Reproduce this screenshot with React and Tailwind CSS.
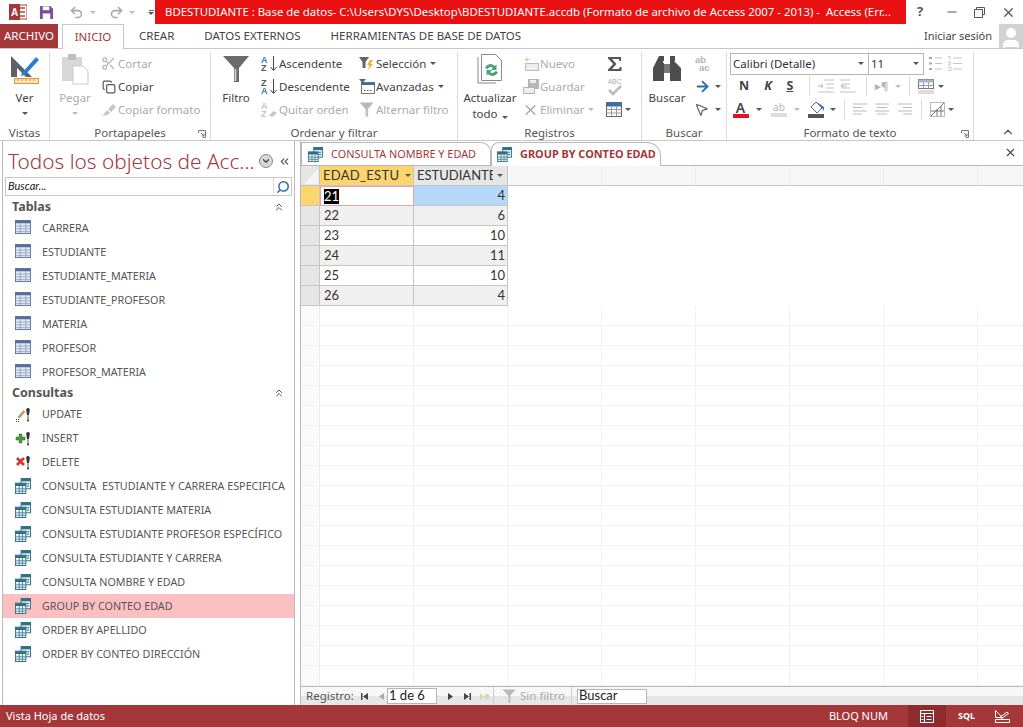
import { Scissors, Copy, Search, ChevronsUp, ChevronsLeft, ChevronDown, ChevronUp, X, Minus, ArrowRight, MousePointer2, Check, User, Undo2, Redo2 } from 'lucide-react';

const tablas = ['CARRERA', 'ESTUDIANTE', 'ESTUDIANTE_MATERIA', 'ESTUDIANTE_PROFESOR', 'MATERIA', 'PROFESOR', 'PROFESOR_MATERIA'];
const consultas = [
  'CONSULTA  ESTUDIANTE Y CARRERA ESPECIFICA',
  'CONSULTA ESTUDIANTE MATERIA',
  'CONSULTA ESTUDIANTE PROFESOR ESPECÍFICO',
  'CONSULTA ESTUDIANTE Y CARRERA',
  'CONSULTA NOMBRE Y EDAD',
  'GROUP BY CONTEO EDAD',
  'ORDER BY APELLIDO',
  'ORDER BY CONTEO DIRECCIÓN',
];
const filas = [[21, 4], [22, 6], [23, 10], [24, 11], [25, 10], [26, 4]];

function Caret({ light }) {
  return <span className={`inline-block w-0 h-0 border-x-[3px] border-t-[3px] border-x-transparent ${light ? 'border-t-[#bbb]' : 'border-t-[#555]'}`} />;
}

function TableIcon() {
  return (
    <svg width="16" height="14" viewBox="0 0 17 15" className="-mt-[3px]">
      <rect x="0.5" y="0.5" width="16" height="14" fill="#e4ebf6" stroke="#5d7096" />
      <rect x="0.5" y="0.5" width="16" height="3" fill="#56709c" />
      <path d="M0.5 6.5h16M0.5 9.5h16M0.5 12.5h16M5.5 3.5v11M11.5 3.5v11" stroke="#8fa5c8" fill="none" />
    </svg>
  );
}

function QueryIcon({ size = 16 }) {
  return (
    <svg width={size} height={size} viewBox="0 0 17 17">
      <rect x="6.5" y="0.5" width="10" height="11" fill="#e8f1f3" stroke="#2f6f85" />
      <rect x="6.5" y="0.5" width="10" height="3" fill="#2f6f85" />
      <path d="M12 6h3M12 8.5h3" stroke="#2f6f85" />
      <rect x="0.5" y="5.5" width="11" height="11" fill="#eef5f6" stroke="#2f6f85" />
      <rect x="0.5" y="5.5" width="11" height="3" fill="#2f6f85" />
      <path d="M0.5 11.5h11M0.5 14h11M4.5 8.5v8M8 8.5v8" stroke="#4d8a9d" fill="none" />
    </svg>
  );
}

function Bang() {
  return (
    <g>
      <path d="M13 1c1.6 0 2 1 1.7 2.400L14 8h-2l-.7-4.600C11 2 11.400 1 13 1z" fill="#333" />
      <path d="M13 8v5" stroke="#555" />
      <circle cx="13" cy="13.500" r="1" fill="#333" />
    </g>
  );
}

function UpdateIcon() {
  return (
    <svg width="17" height="15" viewBox="0 0 17 15">
      <path d="M3 10 8.500 3.500l1.500 1.300L4.500 11z" fill="#d9a441" stroke="#8a6a2a" strokeWidth="0.5" />
      <path d="M1 12h1v1H1zM3 12h1v1H3zM1 14h1v1H1zM3 14h1v1H3z" fill="#444" />
      <Bang />
    </svg>
  );
}

function InsertIcon() {
  return (
    <svg width="17" height="15" viewBox="0 0 17 15">
      <path d="M4 3h3v3h3v3H7v3H4V9H1V6h3z" fill="#4c9a3f" stroke="#2f6d28" strokeWidth="0.5" />
      <Bang />
    </svg>
  );
}

function DeleteIcon() {
  return (
    <svg width="17" height="15" viewBox="0 0 17 15">
      <path d="M2 3l7 7M9 3l-7 7" stroke="#d9352b" strokeWidth="2.800" />
      <Bang />
    </svg>
  );
}

function VerIcon() {
  return (
    <svg width="30" height="31" viewBox="0 0 30 31">
      <path d="M1 2v21h21z" fill="#5a6268" />
      <path d="M7 14v9h9z" fill="#fff" />
      <path d="M12 19 26 3l3 3-14 15-4 1z" fill="#2b7cd3" />
      <rect x="4.500" y="24.500" width="24" height="5" fill="#f7e3b4" stroke="#d99a3b" />
      <path d="M8 25v2M12 25v2M16 25v2M20 25v2M24 25v2" stroke="#d99a3b" />
    </svg>
  );
}

function Funnel({ size = 28, color = '#6b6b6b' }) {
  return (
    <svg width={size} height={size} viewBox="0 0 28 28">
      <path d="M1 1h26L17 13v14h-5V13z" fill={color} />
      <path d="M13.500 14v12" stroke="#dcdcdc" strokeWidth="1.500" />
    </svg>
  );
}

function SortIcon({ top, bottom, topColor, bottomColor, line = true }) {
  return (
    <svg width="17" height="17" viewBox="0 0 17 17">
      <text x="0" y="7.500" fontSize="9" fontWeight="700" fill={topColor} fontFamily="Liberation Sans, sans-serif">{top}</text>
      <text x="0" y="16" fontSize="9" fontWeight="700" fill={bottomColor} fontFamily="Liberation Sans, sans-serif">{bottom}</text>
      {line ? <path d="M12.500 1v14M9.500 12l3 3.500 3-3.500" stroke="#444" fill="none" /> : <path d="M8 14l5-4 3 2-5 4z" fill="#c4c4c4" />}
    </svg>
  );
}

function SmallBtn({ icon, label, disabled, caret }) {
  return (
    <div className={`flex items-center h-[23px] gap-[1px] whitespace-nowrap ${disabled ? 'text-[#ababab]' : 'text-[#444]'}`}>
      <span className="flex items-center justify-center w-[17px] h-[18px] shrink-0">{icon}</span>
      <span>{label}</span>
      {caret && <span className="ml-[3px] flex items-center"><Caret light={disabled} /></span>}
    </div>
  );
}

function Group({ label, w, launcher, children }) {
  return (
    <div className={`${w} shrink-0 flex flex-col border-r border-[#dcdcdc] mt-[3px]`}>
      <div className="h-[74px] flex">{children}</div>
      <div className="relative h-[15px] flex items-center justify-center text-[11.500px] text-[#555] whitespace-nowrap">
        {label}
        {launcher && (
          <svg width="8" height="8" viewBox="0 0 8 8" className="absolute right-[4px] top-[5px]">
            <path d="M0.500 3V0.500H7.500V7.500H5M3 3l3 3M6 3.500V6H3.500" stroke="#777" fill="none" />
          </svg>
        )}
      </div>
    </div>
  );
}

function BigBtn({ icon, label, caret, w, light }) {
  return (
    <div className={`${w} shrink-0 flex flex-col items-center ${light ? 'text-[#ababab]' : 'text-[#444]'}`}>
      <div className="h-[34px] flex items-center justify-center">{icon}</div>
      <div className="mt-[4px] leading-[16px] text-center whitespace-nowrap">{label}</div>
      {caret && <div className="flex justify-center h-[14px] items-center"><Caret light={light} /></div>}
    </div>
  );
}

function Ribbon() {
  return (
    <div className="h-[92px] shrink-0 flex border-b border-[#c6c6c6] text-[11.500px]">
      <Group label="Vistas" w="w-[50px]">
        <BigBtn w="w-[49px]" caret label="Ver" icon={<VerIcon />} />
      </Group>

      <Group label="Portapapeles" w="w-[161px]" launcher>
        <BigBtn w="w-[50px]" light caret label="Pegar" icon={
          <svg width="28" height="32" viewBox="0 0 28 32">
            <rect x="1" y="4" width="20" height="24" fill="#d8d6d8" />
            <rect x="7" y="1" width="8" height="6" fill="#bdbbbd" />
            <path d="M12 13h10l5 5v13H12z" fill="#fff" stroke="#c9c9c9" />
          </svg>
        } />
        <div className="flex flex-col">
          <SmallBtn disabled label="Cortar" icon={<Scissors size={15} color="#b5b5b5" />} />
          <SmallBtn label="Copiar" icon={<Copy size={14} color="#555" />} />
          <SmallBtn disabled label="Copiar formato" icon={
            <svg width="16" height="14" viewBox="0 0 16 14">
              <path d="M1 13c2-1 3-4 5-6l3 3c-2 2-5 3-8 3zM7 6l5-5 3 3-5 5z" fill="#c4c4c4" />
            </svg>
          } />
        </div>
      </Group>

      <Group label="Ordenar y filtrar" w="w-[247px]">
        <BigBtn w="w-[50px]" label="Filtro" icon={<Funnel />} />
        <div className="flex flex-col w-[97px] shrink-0">
          <SmallBtn label="Ascendente" icon={<SortIcon top="A" bottom="Z" topColor="#3b78b5" bottomColor="#555" />} />
          <SmallBtn label="Descendente" icon={<SortIcon top="Z" bottom="A" topColor="#555" bottomColor="#3b78b5" />} />
          <SmallBtn disabled label="Quitar orden" icon={<SortIcon top="A" bottom="Z" topColor="#c4c4c4" bottomColor="#c4c4c4" line={false} />} />
        </div>
        <div className="flex flex-col">
          <SmallBtn caret label="Selección" icon={
            <svg width="16" height="15" viewBox="0 0 16 15">
              <path d="M0 1h10L6.500 6v6h-3V6z" fill="#666" />
              <path d="M11 4 8 9h2.500L9 14l5-6h-2.500L14 4z" fill="#f0b429" />
            </svg>
          } />
          <SmallBtn caret label="Avanzadas" icon={
            <svg width="16" height="15" viewBox="0 0 16 15">
              <rect x="2.500" y="3.500" width="13" height="11" fill="#fff" stroke="#777" />
              <rect x="2.500" y="3.500" width="13" height="2.500" fill="#3b6ea5" />
              <path d="M5 11.500h1.500M8 11.500h1.500M11 11.500h1.500" stroke="#444" />
              <path d="M0 0h7L4.500 3v2h-2V3z" fill="#666" />
            </svg>
          } />
          <SmallBtn disabled label="Alternar filtro" icon={<Funnel size={15} color="#b9b9b9" />} />
        </div>
      </Group>

      <Group label="Registros" w="w-[184px]">
        <BigBtn
          w="w-[64px]"
          label={<>Actualizar<br />todo <span className="ml-[1px] inline-block align-middle"><Caret /></span></>}
          icon={
            <svg width="26" height="30" viewBox="0 0 26 30">
              <path d="M1 3v26h18" fill="none" stroke="#888" />
              <path d="M4.500 0.500h14l6 6v20h-20z" fill="#fff" stroke="#888" />
              <path d="M8 14a6 6 0 0 1 10-2l1.500-1.500V16H14l2-2a3.500 3.500 0 0 0-5.500 1z" fill="#45a37a" />
              <path d="M21 18a6 6 0 0 1-10 2l-1.500 1.500V16H15l-2 2a3.500 3.500 0 0 0 5.500-1z" fill="#45a37a" />
            </svg>
          }
        />
        <div className="flex flex-col w-[84px] shrink-0">
          <SmallBtn disabled label="Nuevo" icon={
            <svg width="16" height="14" viewBox="0 0 16 14"><rect x="2.500" y="6.500" width="13" height="7" fill="#eee" stroke="#bbb" /><path d="M4 0v5M1.500 2.500h5" stroke="#d9c48b" /></svg>
          } />
          <SmallBtn disabled label="Guardar" icon={
            <svg width="16" height="15" viewBox="0 0 16 15"><path d="M5 0h11v10H5z" fill="#b5b5b5" /><path d="M7 1h6v3H7z" fill="#eee" /><rect x="0.500" y="8.500" width="11" height="6" fill="#eee" stroke="#b5b5b5" /></svg>
          } />
          <SmallBtn disabled caret label="Eliminar" icon={<X size={18} color="#a9a9a9" strokeWidth={2} />} />
        </div>
        <div className="flex flex-col">
          <div className="h-[23px] flex items-center justify-center w-[18px]">
            <svg width="16" height="16" viewBox="0 0 16 16">
              <path d="M1 1h13v4h-1.500l-.7-2H5l4.500 5L5 13h7l.8-2H14.500v4H1v-1.500L6.200 8 1 2.500z" fill="#555" />
            </svg>
          </div>
          <div className="h-[23px] w-[18px] flex items-center justify-center">
            <svg width="18" height="20" viewBox="0 0 18 20">
              <text x="2" y="7" fontSize="6.500" fill="#aaa" fontFamily="Liberation Sans, sans-serif">ABC</text>
              <path d="M3 13l4 4 8-8" fill="none" stroke="#bbb" strokeWidth="2.500" />
            </svg>
          </div>
          <div className="h-[23px] flex items-center gap-[3px]">
            <svg width="16" height="15" viewBox="0 0 16 15">
              <rect x="0.500" y="0.500" width="15" height="14" fill="#fff" stroke="#666" />
              <rect x="0.500" y="0.500" width="15" height="4" fill="#3b6ea5" />
              <path d="M0.500 7.500h15M0.500 11h15M5.500 4.500v10M10.500 4.500v10" stroke="#999" />
            </svg>
            <Caret />
          </div>
        </div>
      </Group>

      <Group label="Buscar" w="w-[85px]">
        <BigBtn w="w-[50px]" label="Buscar" icon={
          <svg width="28" height="26" viewBox="0 0 28 26">
            <path d="M6 0h5v5h-1v2h1v18H0V12zM17 0h5v5h-1l7 7v13H17V7z" fill="#4d4d4d" />
            <path d="M11 8h6v9h-6z" fill="#777" />
          </svg>
        } />
        <div className="flex flex-col pl-[2px]">
          <div className="h-[23px] flex items-center pl-[1px]">
            <svg width="17" height="17" viewBox="0 0 17 17">
              <text x="0" y="7.500" fontSize="9.500" fontWeight="600" fill="#b5b5b5" fontFamily="Liberation Sans, sans-serif">ab</text>
              <text x="4" y="15.500" fontSize="9.500" fontWeight="600" fill="#b5b5b5" fontFamily="Liberation Sans, sans-serif">ac</text>
            </svg>
          </div>
          <div className="h-[23px] flex items-center gap-[4px]"><ArrowRight size={17} color="#2b6cb0" strokeWidth={2.500} /><Caret /></div>
          <div className="h-[23px] flex items-center gap-[4px]"><MousePointer2 size={15} color="#666" /><span className="ml-[2px] flex"><Caret /></span></div>
        </div>
      </Group>

      <Group label="Formato de texto" w="w-[247px]" launcher>
        <div className="pl-[3px] flex flex-col">
          <div className="flex items-center h-[23px]">
            <div className="w-[139px] h-[22px] border border-[#b5b5b5] flex items-center justify-between px-[2px] text-[#333]">
              <span>Calibri (Detalle)</span><span className="mr-[2px] flex"><Caret /></span>
            </div>
            <div className="w-[55px] h-[22px] border border-l-0 border-[#b5b5b5] flex items-center justify-between px-[2px] text-[#333]">
              <span>11</span><span className="mr-[2px] flex"><Caret /></span>
            </div>
            <svg width="38" height="18" viewBox="0 0 38 18" className="ml-[3px]">
              <path d="M2 3h3M2 8.500h3M2 14h3" stroke="#aaa" strokeWidth="2" />
              <path d="M8 3h7M8 8.500h7M8 14h7M26 3h9M26 8.500h9M26 14h9" stroke="#c4c4c4" />
              <path d="M21 1.500h2v3M21 7h3l-3 3h3M21 12.500h3v3h-3" stroke="#bbb" fill="none" strokeWidth="0.800" />
            </svg>
          </div>
          <div className="flex items-center h-[22px] text-[12.500px] font-bold text-[#444]">
            <span className="w-[26px] text-center ml-[1px]">N</span>
            <span className="w-[22px] text-center italic">K</span>
            <span className="w-[22px] text-center underline">S</span>
            <div className="w-px h-[20px] bg-[#dcdcdc] mx-[8px]" />
            <svg width="40" height="14" viewBox="0 0 40 14">
              <path d="M6 1h10M8 5h8M8 9h8M0 13h16M22 1h10M24 5h8M24 9h8M22 13h16" stroke="#c4c4c4" />
              <path d="M0 7h5M3 5l2 2-2 2M28 7h-5M25 5l-2 2 2 2" stroke="#b5b5b5" fill="none" />
            </svg>
            <div className="w-px h-[20px] bg-[#dcdcdc] mx-[8px]" />
            <span className="text-[11px] text-[#b5b5b5] w-[14px]">▸¶</span>
            <span className="ml-[6px] flex"><Caret light /></span>
            <div className="w-px h-[20px] bg-[#dcdcdc] mx-[8px]" />
            <svg width="16" height="15" viewBox="0 0 16 15">
              <rect x="0.500" y="0.500" width="15" height="9" fill="#fff" stroke="#777" />
              <rect x="0.500" y="0.500" width="15" height="3" fill="#9fb4cf" />
              <path d="M5.500 3.500v6M10.500 3.500v6M0.500 6.500h15" stroke="#999" />
              <rect x="0" y="11" width="16" height="4" fill="#ddd" />
            </svg>
            <span className="ml-[4px] flex"><Caret /></span>
          </div>
          <div className="flex items-center h-[22px] mt-[1px] text-[#444]">
            <div className="w-[17px] ml-[2px] flex flex-col items-center leading-[13px] text-[14px] font-semibold">A<span className="block w-[16px] h-[4px] bg-[#e81123]" /></div>
            <span className="ml-[7px] flex"><Caret /></span>
            <div className="w-[16px] ml-[9px] flex flex-col items-center text-[10px] leading-[11px] text-[#b5b5b5]">ab<span className="block w-[16px] h-[4px] bg-[#ddd]" /></div>
            <span className="ml-[7px] flex"><Caret light /></span>
            <svg width="17" height="17" viewBox="0 0 17 17" className="ml-[8px]">
              <path d="M8 1l6 6-5 5-6-6z" fill="#fff" stroke="#666" />
              <path d="M9 1l5 6 2 3V6z" fill="#2b7cd3" />
              <rect x="0" y="13" width="16" height="4" fill="#555" />
            </svg>
            <span className="ml-[5px] flex"><Caret /></span>
            <div className="w-px h-[20px] bg-[#dcdcdc] mx-[8px]" />
            <svg width="60" height="12" viewBox="0 0 60 12">
              <path d="M0 1h14M0 4.500h9M0 8h14M0 11h9M22 1h14M24 4.500h10M22 8h14M24 11h10M45 1h14M50 4.500h9M45 8h14M50 11h9" stroke="#bbb" />
            </svg>
            <div className="w-px h-[20px] bg-[#dcdcdc] mx-[8px]" />
            <svg width="15" height="15" viewBox="0 0 15 15">
              <rect x="0.500" y="0.500" width="14" height="14" fill="none" stroke="#777" strokeDasharray="1 1" />
              <path d="M1 14 14 1M7 14V7M1 9h13M11 14V4" stroke="#777" fill="none" />
            </svg>
            <span className="ml-[3px] flex"><Caret /></span>
          </div>
        </div>
      </Group>

      <div className="flex-1 relative">
        <ChevronUp size={14} color="#555" className="absolute right-[8px] bottom-[1px]" />
      </div>
    </div>
  );
}

function NavItem({ icon, label, active }) {
  return (
    <div className={`h-[24px] flex items-center pl-[12px] whitespace-pre text-[10.750px] text-[#555] ${active ? 'bg-[#fcc0c3]' : ''}`}>
      <span className="w-[27px] shrink-0 flex">{icon}</span>
      <span>{label}</span>
    </div>
  );
}

function NavHeader({ label }) {
  return (
    <div className="h-[18px] flex items-center justify-between pl-[9px] pr-[9px] text-[12.500px] font-bold text-[#555]">
      <span>{label}</span>
      <ChevronsUp size={12} color="#555" />
    </div>
  );
}

function NavPane() {
  return (
    <div className="w-[293px] ml-[2px] shrink-0 border-x border-[#b9b9b9] flex flex-col">
      <div className="h-[36px] flex items-center pl-[5px] pt-[4px] shrink-0">
        <span className="text-[20.800px] font-light text-[#a4373a] leading-none whitespace-nowrap w-[250px]">Todos los objetos de Acc...</span>
        <span className="ml-[1px] w-[14px] h-[14px] rounded-full bg-[#d8d8d8] border border-[#888] flex items-center justify-center">
          <ChevronDown size={10} color="#444" strokeWidth={3} />
        </span>
        <ChevronsLeft size={13} color="#555" className="ml-[5px]" />
      </div>
      <div className="h-[19px] mx-[2px] border border-[#c6c6c6] flex items-center shrink-0">
        <span className="flex-1 pl-[2px] italic text-[11px] text-[#222] font-['Lato',sans-serif]">Buscar...</span>
        <span className="w-[18px] h-full border-l border-[#dcdcdc] flex items-center justify-center">
          <Search size={14} color="#2b6cb0" strokeWidth={2.500} className="-scale-x-100" />
        </span>
      </div>
      <div className="pt-[2px]">
        <NavHeader label="Tablas" />
        {tablas.map(t => <NavItem key={t} label={t} icon={<TableIcon />} />)}
        <NavHeader label="Consultas" />
        <NavItem label="UPDATE" icon={<UpdateIcon />} />
        <NavItem label="INSERT" icon={<InsertIcon />} />
        <NavItem label="DELETE" icon={<DeleteIcon />} />
        {consultas.map(c => <NavItem key={c} label={c} icon={<QueryIcon />} active={c === 'GROUP BY CONTEO EDAD'} />)}
      </div>
    </div>
  );
}

function Datasheet() {
  return (
    <div className="flex-1 overflow-hidden font-['Lato',sans-serif] text-[13px] text-[#333]">
      <div className="flex h-[20px] border-b border-[#c6c6c6] bg-[#f6f6f6]">
        <div className="w-[19px] shrink-0 bg-[#e6e6e6] border-r border-[#c6c6c6] relative overflow-hidden">
          <svg width="19" height="20" viewBox="0 0 19 20"><path d="M17 3v15H3z" fill="#f4f4f4" /></svg>
        </div>
        <div className="w-[94px] shrink-0 bg-[#fdd56d] border-r border-[#c6c6c6] flex items-center pl-[3px] overflow-hidden">
          <span className="w-[77px] overflow-hidden whitespace-nowrap tracking-[0.3px]">EDAD_ESTUDIANTE</span>
          <span className="ml-[5px] flex"><Caret /></span>
        </div>
        <div className="w-[94px] shrink-0 bg-[#e6e6e6] border-r border-[#c6c6c6] flex items-center pl-[3px] overflow-hidden">
          <span className="w-[76px] overflow-hidden whitespace-nowrap">ESTUDIANTES</span>
          <span className="ml-[4px] flex"><Caret /></span>
        </div>
        {[...Array(6)].map((_, i) => <div key={i} className="w-[94px] shrink-0 border-r border-[#ececec]" />)}
      </div>
      {filas.map(([edad, total], i) => (
        <div key={edad} className={`flex h-[20px] border-b border-[#c6c6c6] w-[207px] ${i % 2 ? 'bg-[#f0f0f0]' : 'bg-white'}`}>
          <div className={`w-[19px] shrink-0 border-r border-[#c6c6c6] ${i === 0 ? 'bg-[#fdd56d]' : 'bg-[#e6e6e6]'}`} />
          {i === 0 ? (
            <div className="w-[94px] shrink-0 h-[20px] border border-[#e9a5a5] bg-white flex items-center pl-[3px]">
              <span className="bg-black text-white leading-[15px]">{edad}</span>
            </div>
          ) : (
            <div className="w-[94px] shrink-0 border-r border-[#c6c6c6] flex items-center pl-[4px]">{edad}</div>
          )}
          <div className={`w-[94px] shrink-0 border-r border-[#c6c6c6] flex items-center justify-end pr-[2px] ${i === 0 ? 'bg-[#b5d7fa]' : ''}`}>{total}</div>
        </div>
      ))}
      {[...Array(19)].map((_, i) => (
        <div key={i} className="flex h-[20px] border-b border-[#f2f2f2]">
          <div className="w-[19px] shrink-0 border-r border-[#ececec] bg-[#fafafa]" />
          {[...Array(8)].map((_, j) => <div key={j} className="w-[94px] shrink-0 border-r border-[#f2f2f2]" />)}
        </div>
      ))}
    </div>
  );
}

function RecIcon({ d, color = '#444' }) {
  return (
    <svg width="9" height="9" viewBox="0 0 9 9"><path d={d} fill={color} /></svg>
  );
}

function RecordBar() {
  return (
    <div className="h-[19px] shrink-0 border-t border-[#b9b9b9] bg-gradient-to-b from-[#f7f7f7] from-50% to-[#e6e6e6] to-50% flex items-center text-[11.500px] text-[#555] pl-[5px]">
      <span className="w-[54px]">Registro:</span>
      <span className="w-[18px] flex"><RecIcon d="M1 1h1.500v7H1zM8 1v7L3 4.500z" /></span>
      <span className="w-[9px] flex"><RecIcon d="M6 1v7L1 4.500z" color="#aaa" /></span>
      <div className="w-[50px] h-[16px] bg-white border border-[#b5b5b5] flex items-center pl-[1px] text-[#222] font-['Lato',sans-serif] text-[13px]">1 de 6</div>
      <span className="w-[17px] ml-[9px] flex"><RecIcon d="M2 1v7l5-3.500z" /></span>
      <span className="w-[17px] flex"><RecIcon d="M1 1v7l5-3.500zM6.500 1H8v7H6.500z" /></span>
      <span className="w-[13px] flex"><RecIcon d="M0 1v7l4-3.500zM5 2h4v5H5z" color="#d8d8b0" /></span>
      <div className="w-px h-[18px] bg-[#d0d0d0]" />
      <span className="ml-[8px] flex"><Funnel size={14} color="#b9b9b9" /></span>
      <span className="ml-[4px] w-[51px] text-[#ababab] whitespace-nowrap">Sin filtro</span>
      <div className="w-px h-[18px] bg-[#d0d0d0]" />
      <div className="ml-[5px] w-[70px] h-[15px] bg-white border border-[#b5b5b5] flex items-center pl-[1px] text-[#222] font-['Lato',sans-serif] text-[13px]">Buscar</div>
    </div>
  );
}

function DocTabs() {
  return (
    <div className="h-[25px] shrink-0 flex items-end border-b border-[#b9b9b9] relative text-[10.900px]">
      <div className="w-[190px] h-[23px] flex items-center pl-[6px] gap-[8px] text-[#a4373a] border border-b-0 border-[#b9b9b9] rounded-tr-[10px] whitespace-nowrap">
        <QueryIcon size={15} />
        <span>CONSULTA NOMBRE Y EDAD</span>
      </div>
      <div className="-mb-px w-[170px] h-[24px] flex items-center pl-[5px] gap-[8px] text-[#a4373a] font-bold bg-white border border-b-0 border-[#b9b9b9] rounded-t-[8px] rounded-tr-[14px] whitespace-nowrap">
        <QueryIcon size={15} />
        <span>GROUP BY CONTEO EDAD</span>
      </div>
      <X size={13} color="#444" className="absolute right-[6px] top-[5px]" />
    </div>
  );
}

export default function App() {
  return (
    <div className="w-[1023px] h-[727px] flex flex-col overflow-hidden bg-white font-['Noto_Sans',sans-serif] text-[#444]">
      {/* barra de titulo */}
      <div className="h-[24px] shrink-0 flex items-center">
        <div className="w-[155px] shrink-0 flex items-center pl-[9px]">
          <svg width="18" height="16" viewBox="0 0 18 16">
            <rect x="6" y="1" width="12" height="14" fill="#fff" stroke="#b7472a" />
            <path d="M9 4h7M9 8h7M9 12h7" stroke="#b7472a" strokeWidth="1.500" />
            <rect x="0" y="0" width="11" height="16" fill="#a4373a" />
            <text x="2" y="12" fontSize="10" fontWeight="700" fill="#fff" fontFamily="Liberation Sans, sans-serif">A</text>
          </svg>
          <svg width="15" height="15" viewBox="0 0 16 16" className="ml-[12px]">
            <path d="M1 1h11l3 3v11H1z" fill="#7a4fa3" />
            <rect x="4" y="1.500" width="7" height="4" fill="#fff" />
            <rect x="4" y="9" width="8" height="6" fill="#fff" />
          </svg>
          <Undo2 size={15} color="#aaa" strokeWidth={2.500} className="ml-[15px]" />
          <span className="ml-[6px] flex"><Caret light /></span>
          <Redo2 size={15} color="#aaa" strokeWidth={2.500} className="ml-[13px]" />
          <span className="ml-[5px] flex"><Caret light /></span>
          <span className="ml-[13px] flex flex-col items-center gap-[1px]"><span className="w-[5px] h-px bg-[#666]" /><Caret /></span>
        </div>
        <div className="w-[751px] h-[24px] shrink-0 bg-[#e81010] text-white text-[11.400px] flex items-center pl-[10px] whitespace-pre overflow-hidden">
          {'BDESTUDIANTE : Base de datos- C:\\Users\\DYS\\Desktop\\BDESTUDIANTE.accdb (Formato de archivo de Access 2007 - 2013) -  Access (Err...'}
        </div>
        <div className="flex-1 flex items-center text-[#555]">
          <span className="ml-[11px] w-[14px] font-bold text-[13px]">?</span>
          <Minus size={14} strokeWidth={2} className="ml-[14px]" />
          <svg width="11" height="11" viewBox="0 0 11 11" className="ml-[15px]">
            <path d="M2.500 2.500V.5h8v7h-2M.5 2.500h8v8h-8z" fill="none" stroke="#555" />
          </svg>
          <X size={15} strokeWidth={2} className="ml-[16px]" />
        </div>
      </div>

      {/* pestañas */}
      <div className="h-[25px] shrink-0 flex border-b border-[#c6c6c6] text-[11.500px] text-[#444]">
        <div className="w-[58px] h-[24px] bg-[#a4373a] text-white flex items-center justify-center">ARCHIVO</div>
        <div className="ml-[4px] w-[62px] h-[25px] bg-white border border-b-0 border-[#c6c6c6] text-[#a4373a] flex items-center justify-center">INICIO</div>
        <div className="ml-[15px] flex items-center">CREAR</div>
        <div className="ml-[30px] flex items-center">DATOS EXTERNOS</div>
        <div className="ml-[30px] flex items-center">HERRAMIENTAS DE BASE DE DATOS</div>
        <div className="ml-auto flex items-center text-[11px]">Iniciar sesión</div>
        <div className="ml-[7px] w-[24px] h-[24px] bg-[#d2d2d2] overflow-hidden flex items-end justify-center">
          <User size={26} color="#fff" fill="#fff" className="-mb-[3px]" />
        </div>
      </div>

      <Ribbon />

      <div className="flex-1 flex min-h-0">
        <NavPane />
        <div className="ml-[5px] flex-1 flex flex-col min-w-0 border-l border-[#b9b9b9]">
          <DocTabs />
          <Datasheet />
          <RecordBar />
        </div>
      </div>

      {/* barra de estado */}
      <div className="h-[22px] shrink-0 bg-[#a4373a] text-white text-[11px] flex items-center pl-[6px]">
        <span>Vista Hoja de datos</span>
        <span className="ml-auto">BLOQ NUM</span>
        <div className="ml-[20px] w-[38px] h-[22px] bg-[#8e2b2e] flex items-center justify-center">
          <svg width="14" height="13" viewBox="0 0 14 13">
            <path d="M.5.5h13v12H.5zM.5 3.500h13M4.500 3.500v9M6.500 6.500h5M6.500 9.500h5M1.500 6.500h2M1.500 9.500h2" fill="none" stroke="#fff" />
          </svg>
        </div>
        <span className="ml-[12px] text-[9px] font-bold w-[15px]">SQL</span>
        <svg width="15" height="13" viewBox="0 0 15 13" className="ml-[22px] mr-[13px]">
          <path d="M.5.5v7h7zM4 8l8-6 1.500 1.500L6 9" fill="none" stroke="#fff" />
          <path d="M.5 9.500h14v3H.5z" fill="none" stroke="#fff" />
        </svg>
      </div>
    </div>
  );
}
